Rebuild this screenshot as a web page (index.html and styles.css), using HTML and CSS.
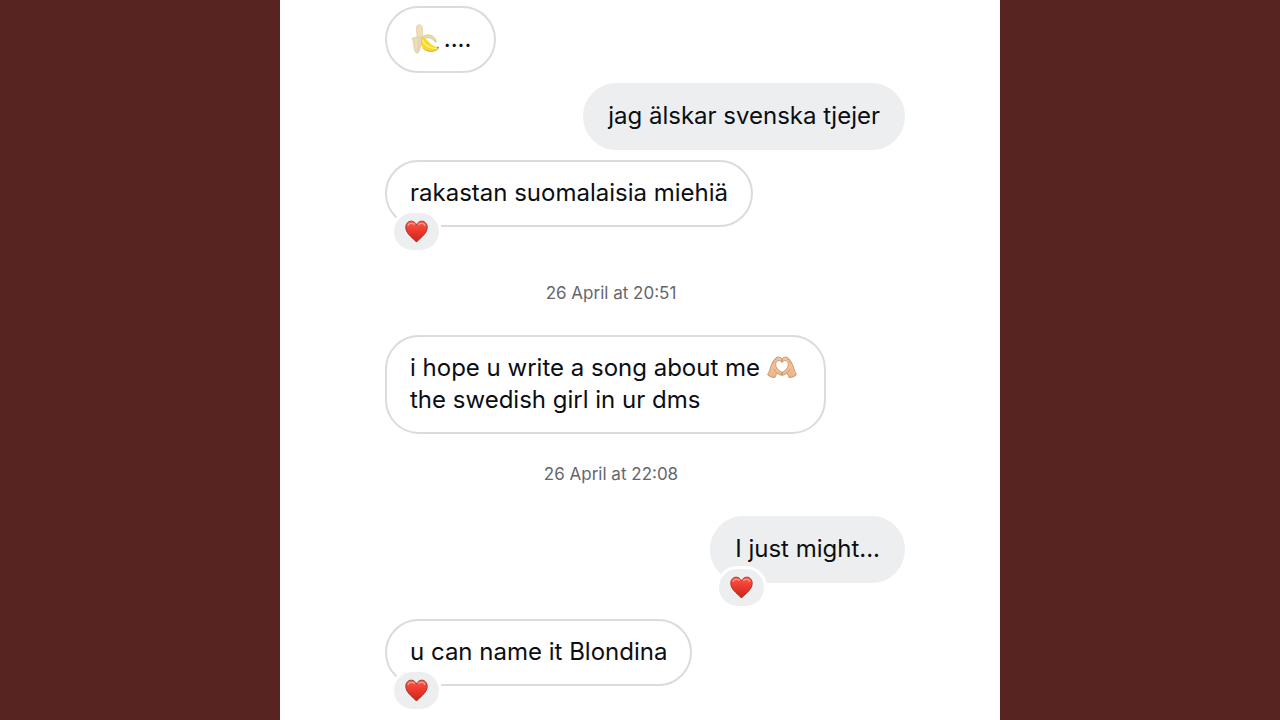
FILE: index.html
```
<!DOCTYPE html>
<html lang="en">
  <head>
    <meta charset="utf-8" />
    <meta name="viewport" content="width=device-width, initial-scale=1" />
    <title>Messages</title>
    <link rel="stylesheet" href="styles.css">
  </head>
  <body>
    <!-- shared icons -->
    <svg class="sprite" aria-hidden="true">
      <defs>
        <linearGradient id="heart-fill" x1="0" y1="0" x2="0" y2="1">
          <stop offset="0" stop-color="#fb5a4d" />
          <stop offset="0.45" stop-color="#ee3a30" />
          <stop offset="1" stop-color="#c92419" />
        </linearGradient>
        <linearGradient id="skin" x1="0" y1="0" x2="0" y2="1">
          <stop offset="0" stop-color="#f5c79c" />
          <stop offset="1" stop-color="#e9b68c" />
        </linearGradient>
        <symbol id="heart" viewBox="0 0 24 24">
          <path d="M12 23C9.5 19.7 0.8 14.6 0.8 7.7C0.8 4 3.2 1.2 6.5 1.2C9.2 1.2 11.1 3 12 5.3C12.9 3 14.8 1.2 17.5 1.2C20.8 1.2 23.2 4 23.2 7.7C23.2 14.6 14.5 19.7 12 23Z" fill="url(#heart-fill)" stroke="#a3382f" stroke-width="1" />
          <path d="M3.2 5.7C4 3.4 7.6 2.8 9.7 4.5M14.3 4.5C16.4 2.8 20 3.4 20.8 5.7" fill="none" stroke="#ff9b8e" stroke-width="1.3" stroke-linecap="round" />
        </symbol>
      </defs>
    </svg>

    <main class="chat">
      <div class="message">
        <svg class="banana" viewBox="0 0 28 30" role="img" aria-label="banana">
          <path d="M11 13.5C13 10.8 17 10.2 20 11.3C23 12.500 25.200 15 25.300 18.300C23.500 18.200 22.500 15.500 19.500 14.200C16.500 13 13.500 13.800 11.500 16Z" fill="#eadba8" stroke="#c5ad62" stroke-width="0.500" />
          <path d="M9.800 13.300C12.500 12.500 14.500 14 16.500 16.500C19 19.700 22 22.500 27.300 23L27 25.200C23.500 28 17.500 28.800 13.500 25.500C10 22.500 8 17.500 9.800 13.300Z" fill="#f8d82c" />
          <path d="M11.200 15.500C13 20.500 17.500 24 25.500 24.700" fill="none" stroke="#ffef72" stroke-width="1.500" />
          <path d="M12 24C15.500 28 22 28.300 26.700 25.300" fill="none" stroke="#d4af1e" stroke-width="0.900" />
          <path d="M26 22.800L27.800 22.900L27.200 25.100Z" fill="#726329" />
          <path d="M5.900 2.200C6.700 0.300 10 0.300 11 2.500C12 5.500 11.800 10 11.200 14.500L6.800 14.800C5.500 10.500 4.900 5.500 5.900 2.200Z" fill="#f0deb8" stroke="#d5bd94" stroke-width="0.500" />
          <path d="M1 14.500C4 13 8 12.300 10.300 13.800C10.500 19 9.500 25.500 7.500 28.500C6.400 29.500 4.800 29 4 27.500C2.500 24 3.300 18 1 14.500Z" fill="#eedcb9" stroke="#cdb48b" stroke-width="0.500" />
          <path d="M8 14.500C8 20 7.500 24 6 27.500" fill="none" stroke="#d9c499" stroke-width="0.700" />
        </svg>
        ....
      </div>

      <div class="message message-sent" lang="sv">jag älskar svenska tjejer</div>

      <div class="message message-reacted" lang="fi">
        rakastan suomalaisia miehiä
        <span class="reaction"><svg class="heart" role="img" aria-label="heart"><use href="#heart" /></svg></span>
      </div>

      <time class="timestamp">26 April at 20:51</time>

      <div class="message">
        i hope u write a song about me
        <svg class="hands" viewBox="0 0 30 22" role="img" aria-label="heart hands">
          <g id="hand">
            <path d="M0.600 18.700C2.500 15.500 3.200 11.500 4.600 8.300C5.700 5.700 7.500 2.800 9.500 1.500C11.500 0.500 14 1.200 15 3L15 6.300C13.800 4.300 11.300 3.900 9.800 5.500C8 7.500 8.700 11 10.700 13.200C12 14.700 13.700 15.500 15 16.500L15 19.200C13.300 19.400 11.800 18.300 10.300 17.200C9.300 18.300 8.500 19.600 8 21.500C5 21.700 2.200 20.600 0.600 18.700Z" fill="url(#skin)" stroke="#bd8058" stroke-width="0.700" />
            <path d="M5.500 8L8 4.800M7.600 4.300L10.300 2.600M7 13C7.700 15 8.800 16.200 10.300 17.200" fill="none" stroke="#c58a62" stroke-width="0.600" />
          </g>
          <use href="#hand" transform="matrix(-1 0 0 1 30 0)" />
        </svg>
        the swedish girl in ur dms
      </div>

      <time class="timestamp">26 April at 22:08</time>

      <div class="message message-sent message-reacted">
        I just might...
        <span class="reaction"><svg class="heart" role="img" aria-label="heart"><use href="#heart" /></svg></span>
      </div>

      <div class="message message-reacted">
        u can name it Blondina
        <span class="reaction"><svg class="heart" role="img" aria-label="heart"><use href="#heart" /></svg></span>
      </div>
    </main>
  </body>
</html>
```

FILE: styles.css
```
* {
  box-sizing: border-box;
}

body {
  margin: 0;
  background: #582421;
  color: #0b0e12;
  font-family: Inter, "Liberation Sans", sans-serif;
  font-size: 24px;
  line-height: 32px;
}

.sprite {
  position: absolute;
  width: 0;
  height: 0;
}

.chat {
  display: flex;
  flex-direction: column;
  align-items: flex-start;
  gap: 10px;
  max-width: 720px;
  min-height: 100vh;
  margin: 0 auto;
  padding: 6px 95px 10px 105px;
  background: #fff;
}

.message {
  position: relative;
  max-width: 441px;
  padding: 15px 23px 16px;
  border: 2px solid #d9dbde;
  border-radius: 34px;
}

.message-sent {
  align-self: flex-end;
  background: #edeef0;
  border-color: #edeef0;
}

.message-reacted {
  margin-bottom: 26px;
}

/* sits over the bottom left corner, white ring cuts into the bubble */
.reaction {
  position: absolute;
  left: 4px;
  bottom: -28px;
  display: flex;
  align-items: center;
  justify-content: center;
  width: 51px;
  height: 43px;
  border: 3px solid #fff;
  border-radius: 22px;
  background: #edeef0;
}

.heart {
  width: 23px;
  height: 23px;
}

.banana {
  width: 28px;
  height: 30px;
  margin: 0 -2px 0 1px;
  vertical-align: -7px;
}

.hands {
  width: 30px;
  height: 22px;
  vertical-align: -2px;
}

/* centred a little left of the bubbles' middle */
.timestamp {
  align-self: center;
  margin: 20px 68px 22px 0;
  color: #65676b;
  font-size: 17px;
  line-height: 20px;
}
```
